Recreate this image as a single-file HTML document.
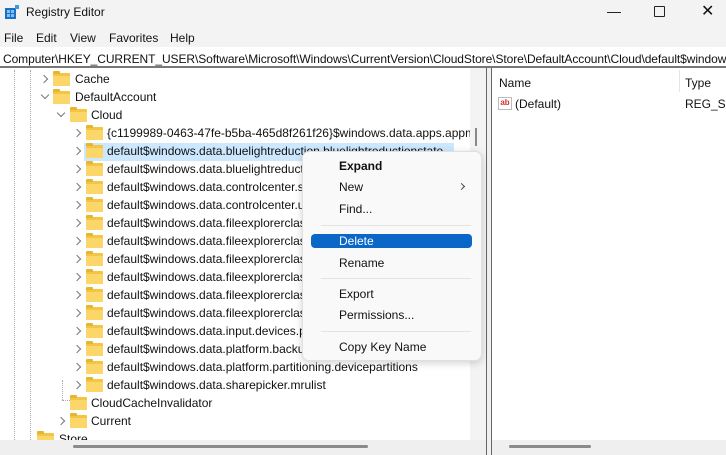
<!DOCTYPE html>
<html><head><style>
*{margin:0;padding:0;box-sizing:border-box}
html,body{width:726px;height:455px;overflow:hidden}
body{background:#fff;font-family:"Liberation Sans",sans-serif;font-size:12px;color:#111;position:relative}
.a{position:absolute;white-space:nowrap}
.t{position:absolute;white-space:nowrap;font-size:12px;line-height:18px}
.f{position:absolute;width:17px;height:13px;background:#f4c542;border-radius:1px}
.f:before{content:"";position:absolute;left:0;top:-2px;width:7px;height:3px;background:#e8b530;border-radius:1px 1px 0 0}
.f:after{content:"";position:absolute;left:0;top:3px;width:17px;height:10px;background:#fbd76a}
.ar{position:absolute;width:6px;height:6px;border-right:1.2px solid #777;border-bottom:1.2px solid #777;transform:rotate(-45deg)}
.dn{transform:rotate(45deg)}
.sep{position:absolute;left:321px;width:150px;height:1px;background:#e3e3e3}
.mi{position:absolute;left:339px;font-size:12px;line-height:16px}
#tree{position:absolute;left:0;top:70px;width:470px;height:370px;overflow:hidden}
#tree>*{margin-top:-70px}
</style></head><body>
<div class="a" style="left:0;top:0;width:726px;height:47px;background:#f3f3f3"></div>
<svg class="a" style="left:4px;top:4px" width="16" height="16"><rect x="1" y="4" width="11" height="11" fill="#1e6fc4"/><rect x="3" y="6" width="3" height="3" fill="#7fc2f0"/><rect x="7" y="6" width="3" height="3" fill="#7fc2f0"/><rect x="3" y="10" width="3" height="3" fill="#7fc2f0"/><rect x="7" y="10" width="3" height="3" fill="#7fc2f0"/><rect x="11" y="1" width="4" height="4" fill="#3a9ae0"/></svg>
<div class="a" style="left:26px;top:5px;font-size:12px">Registry Editor</div>
<div class="a" style="left:607px;top:3px;font-size:14px">&#8212;</div>
<div class="a" style="left:654px;top:6px;width:11px;height:11px;border:1px solid #222;border-radius:1px"></div>
<div class="a" style="left:701px;top:1px;font-size:16px">&#10005;</div>
<div class="a" style="left:4px;top:31px">File</div>
<div class="a" style="left:36px;top:31px">Edit</div>
<div class="a" style="left:70px;top:31px">View</div>
<div class="a" style="left:109px;top:31px">Favorites</div>
<div class="a" style="left:170px;top:31px">Help</div>
<div class="a" style="left:0;top:47px;width:726px;height:21px;background:#fff;border-bottom:2px solid #777;overflow:hidden">
<div class="a" style="left:3px;top:5px;font-size:12px;letter-spacing:-0.08px">Computer\HKEY_CURRENT_USER\Software\Microsoft\Windows\CurrentVersion\CloudStore\Store\DefaultAccount\Cloud\default$windows.data.bluelightreduction</div></div>
<div class="a" style="left:14px;top:70px;height:370px;border-left:1px dotted #aaa"></div>
<div class="a" style="left:30px;top:70px;height:370px;border-left:1px dotted #aaa"></div>
<div class="a" style="left:470px;top:68px;width:16px;height:372px;background:#f3f3f3"></div>
<div class="a" style="left:475px;top:128px;width:2px;height:18px;background:#888"></div>
<div class="a" style="left:486px;top:68px;width:1px;height:387px;background:#666"></div>
<div class="a" style="left:487px;top:68px;width:4px;height:387px;background:#f0f0f0"></div>
<div class="a" style="left:491px;top:68px;width:1px;height:387px;background:#666"></div>
<div class="a" style="left:0;top:440px;width:486px;height:15px;background:#efefef"></div>
<div class="a" style="left:73px;top:445px;width:295px;height:3px;background:#8a8a8a;border-radius:2px"></div>
<div class="a" style="left:492px;top:440px;width:234px;height:15px;background:#efefef"></div>
<div class="a" style="left:509px;top:445px;width:82px;height:3px;background:#8a8a8a;border-radius:2px"></div>
<div class="a" style="left:499px;top:76px">Name</div>
<div class="a" style="left:679px;top:70px;width:1px;height:22px;background:#e5e5e5"></div>
<div class="a" style="left:685px;top:76px">Type</div>
<div class="a" style="left:498px;top:97px;width:14px;height:13px;border:1px solid #bbb;background:#fff;font-size:8px;color:#c33;line-height:10px;text-align:center;font-weight:bold">ab</div>
<div class="a" style="left:515px;top:97px">(Default)</div>
<div class="a" style="left:685px;top:97px;width:41px;overflow:hidden">REG_SZ</div>

<div id="tree"><div style="position:relative;height:440px">
<div class="a" style="left:62px;top:400px;width:8px;border-top:1px dotted #aaa"></div>
<div class="a" style="left:62px;top:380px;height:20px;border-left:1px dotted #aaa"></div>
<div class="a" style="left:84px;top:143px;width:370px;height:18px;background:#cce8ff"></div>
<div class="ar" style="left:41px;top:76px"></div><div class="f" style="left:53px;top:73px"></div><div class="t" style="left:75px;top:70px">Cache</div>
<div class="ar dn" style="left:42px;top:92px"></div><div class="f" style="left:53px;top:91px"></div><div class="t" style="left:75px;top:88px">DefaultAccount</div>
<div class="ar dn" style="left:58px;top:110px"></div><div class="f" style="left:70px;top:109px"></div><div class="t" style="left:91px;top:106px">Cloud</div>
<div class="ar" style="left:74px;top:130px"></div><div class="f" style="left:86px;top:127px"></div><div class="t" style="left:107px;top:124px">{c1199989-0463-47fe-b5ba-465d8f261f26}$windows.data.apps.appme</div>
<div class="ar" style="left:74px;top:148px"></div><div class="f" style="left:86px;top:145px"></div><div class="t" style="left:107px;top:142px">default$windows.data.bluelightreduction.bluelightreductionstate</div>
<div class="ar" style="left:74px;top:166px"></div><div class="f" style="left:86px;top:163px"></div><div class="t" style="left:107px;top:160px">default$windows.data.bluelightreduction.settings</div>
<div class="ar" style="left:74px;top:184px"></div><div class="f" style="left:86px;top:181px"></div><div class="t" style="left:107px;top:178px">default$windows.data.controlcenter.settings</div>
<div class="ar" style="left:74px;top:202px"></div><div class="f" style="left:86px;top:199px"></div><div class="t" style="left:107px;top:196px">default$windows.data.controlcenter.uistate</div>
<div class="ar" style="left:74px;top:220px"></div><div class="f" style="left:86px;top:217px"></div><div class="t" style="left:107px;top:214px">default$windows.data.fileexplorerclassic</div>
<div class="ar" style="left:74px;top:238px"></div><div class="f" style="left:86px;top:235px"></div><div class="t" style="left:107px;top:232px">default$windows.data.fileexplorerclassic</div>
<div class="ar" style="left:74px;top:256px"></div><div class="f" style="left:86px;top:253px"></div><div class="t" style="left:107px;top:250px">default$windows.data.fileexplorerclassic</div>
<div class="ar" style="left:74px;top:274px"></div><div class="f" style="left:86px;top:271px"></div><div class="t" style="left:107px;top:268px">default$windows.data.fileexplorerclassic</div>
<div class="ar" style="left:74px;top:292px"></div><div class="f" style="left:86px;top:289px"></div><div class="t" style="left:107px;top:286px">default$windows.data.fileexplorerclassic</div>
<div class="ar" style="left:74px;top:310px"></div><div class="f" style="left:86px;top:307px"></div><div class="t" style="left:107px;top:304px">default$windows.data.fileexplorerclassic</div>
<div class="ar" style="left:74px;top:328px"></div><div class="f" style="left:86px;top:325px"></div><div class="t" style="left:107px;top:322px">default$windows.data.input.devices.pen</div>
<div class="ar" style="left:74px;top:346px"></div><div class="f" style="left:86px;top:343px"></div><div class="t" style="left:107px;top:340px">default$windows.data.platform.backup</div>
<div class="ar" style="left:74px;top:364px"></div><div class="f" style="left:86px;top:361px"></div><div class="t" style="left:107px;top:358px">default$windows.data.platform.partitioning.devicepartitions</div>
<div class="ar" style="left:74px;top:382px"></div><div class="f" style="left:86px;top:379px"></div><div class="t" style="left:107px;top:376px">default$windows.data.sharepicker.mrulist</div>
<div class="f" style="left:70px;top:397px"></div><div class="t" style="left:91px;top:394px">CloudCacheInvalidator</div>
<div class="ar" style="left:58px;top:418px"></div><div class="f" style="left:70px;top:415px"></div><div class="t" style="left:91px;top:412px">Current</div>
<div class="f" style="left:37px;top:433px"></div><div class="t" style="left:59px;top:430px">Store</div>
</div></div>

<div class="a" style="left:302px;top:151px;width:180px;height:210px;background:#f9f9f9;border:1px solid #e0e0e0;border-radius:7px;box-shadow:0 2px 8px rgba(0,0,0,.18)"></div>
<div class="mi" style="top:158px;font-weight:bold">Expand</div>
<div class="mi" style="top:179px">New</div><div class="ar" style="left:459px;top:184px;width:5px;height:5px;border-color:#444"></div>
<div class="mi" style="top:201px">Find...</div>
<div class="sep" style="top:225px"></div>
<div class="a" style="left:311px;top:234px;width:161px;height:14px;background:#0a67c8;border-radius:4px"></div>
<div class="mi" style="top:233px;color:#fff">Delete</div>
<div class="mi" style="top:255px">Rename</div>
<div class="sep" style="top:278px"></div>
<div class="mi" style="top:286px">Export</div>
<div class="mi" style="top:307px">Permissions...</div>
<div class="sep" style="top:331px"></div>
<div class="mi" style="top:339px">Copy Key Name</div>
</body></html>
